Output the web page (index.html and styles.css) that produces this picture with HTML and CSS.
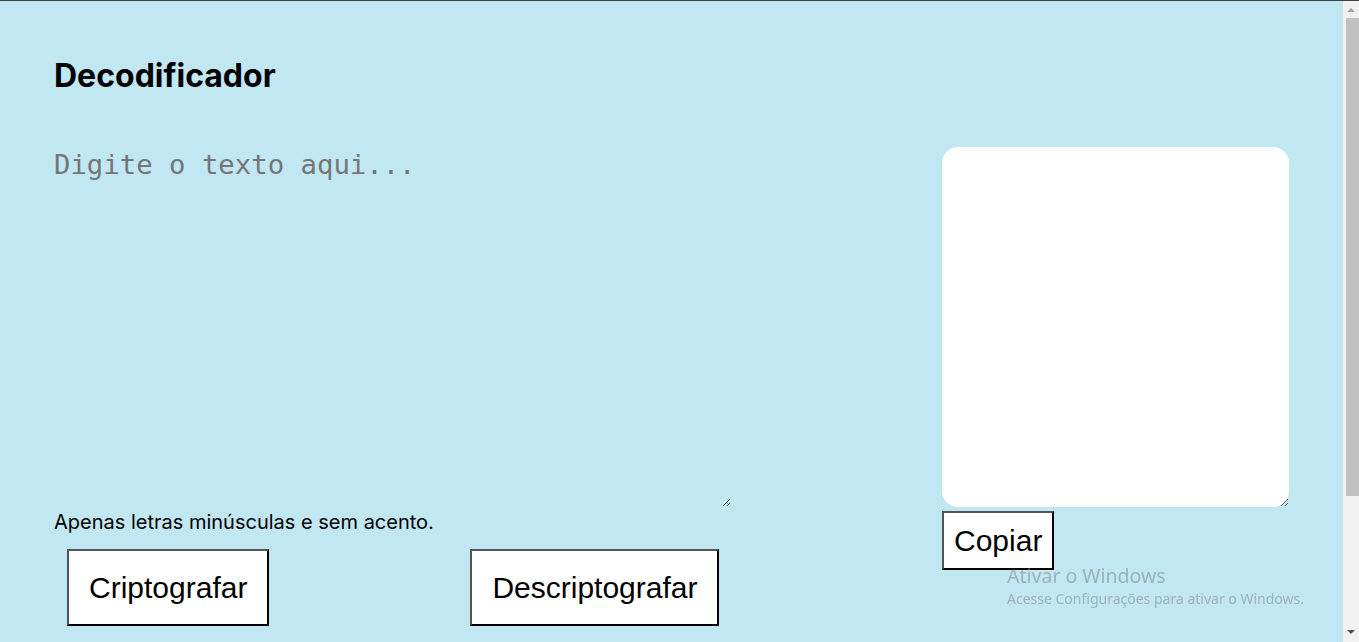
FILE: index.html
```html
<!DOCTYPE html>
<html lang="pt-BR">
<head>
<meta charset="utf-8">
<title>Decodificador</title>
<link rel="stylesheet" href="styles.css">
</head>
<body>
<main class="page">
  <h1 class="title">Decodificador</h1>
  <div class="columns">
    <section class="left">
      <textarea class="input" placeholder="Digite o texto aqui..."></textarea>
      <p class="hint">Apenas letras minúsculas e sem acento.</p>
      <div class="actions">
        <button class="btn btn-big">Criptografar</button>
        <button class="btn btn-big">Descriptografar</button>
      </div>
    </section>
    <section class="right">
      <textarea class="output"></textarea>
      <button class="btn btn-copy">Copiar</button>
    </section>
  </div>
</main>
<div class="watermark">
  <div class="wm-title">Ativar o Windows</div>
  <div class="wm-sub">Acesse Configurações para ativar o Windows.</div>
</div>
<div class="scrollbar" aria-hidden="true">
  <span class="sb-arrow sb-up"></span>
  <span class="sb-thumb"></span>
  <span class="sb-arrow sb-down"></span>
</div>
</body>
</html>
```

FILE: styles.css
```css
html, body {
  margin: 0;
  padding: 0;
}
body {
  background: #c0e7f2;
  border-top: 1px solid #444;
  font-family: Inter, "Liberation Sans", sans-serif;
  min-height: 817px;
}
.page {
  padding: 56px 70px 0 54px;
}
.title {
  margin: 0;
  font-family: Inter, sans-serif;
  font-weight: 700;
  font-size: 32px;
  line-height: 38px;
  color: #000;
}
.columns {
  display: flex;
  justify-content: space-between;
  align-items: flex-start;
  margin-top: 52px;
}
.left {
  width: 677px;
}
.input {
  display: block;
  width: 677px;
  height: 360px;
  box-sizing: border-box;
  margin: 0;
  padding: 2px 0;
  border: none;
  outline: none;
  background: transparent;
  font-family: "DejaVu Sans Mono", monospace;
  font-size: 27.3px;
  color: #000;
}
.input::placeholder {
  color: #767676;
}
.hint {
  margin: 3px 0 0 0;
  font-family: Inter, sans-serif;
  font-size: 20px;
  line-height: 24px;
  color: #000;
}
.actions {
  display: flex;
  gap: 201px;
  margin: 15px 0 0 13px;
}
.btn {
  background: #fff;
  color: #000;
  border: 2px outset #000;
  border-radius: 0;
  font-family: "Liberation Sans", Arial, sans-serif;
  font-size: 30px;
  line-height: 35px;
  margin: 0;
}
.btn-big {
  padding: 19px 20px;
}
.right {
  width: 347px;
  display: flex;
  flex-direction: column;
  align-items: flex-start;
}
.output {
  display: block;
  width: 347px;
  height: 360px;
  box-sizing: border-box;
  margin: 0;
  border: none;
  outline: none;
  border-radius: 16px;
  background: #fff;
}
.btn-copy {
  margin-top: 4px;
  padding: 10px 10px;
}
.watermark {
  position: fixed;
  left: 1007px;
  top: 563px;
  font-family: "Noto Sans", "Open Sans", sans-serif;
  color: rgba(125, 135, 140, 0.55);
}
.wm-title {
  font-size: 19.5px;
  line-height: 26px;
}
.wm-sub {
  font-size: 14px;
  line-height: 20px;
}
.scrollbar {
  position: fixed;
  top: 1px;
  right: 0;
  bottom: 0;
  width: 16px;
  background: #f1f1f1;
  display: flex;
  flex-direction: column;
  align-items: center;
}
.sb-arrow {
  width: 0;
  height: 0;
  border-left: 4px solid transparent;
  border-right: 4px solid transparent;
}
.sb-up {
  margin-top: 7px;
  border-bottom: 4px solid #a3a3a3;
}
.sb-thumb {
  margin-top: 6px;
  margin-left: 3px;
  width: 13px;
  height: 478px;
  background: #c1c1c1;
}
.sb-down {
  margin-top: auto;
  margin-bottom: 8px;
  border-top: 4px solid #505050;
}
```
